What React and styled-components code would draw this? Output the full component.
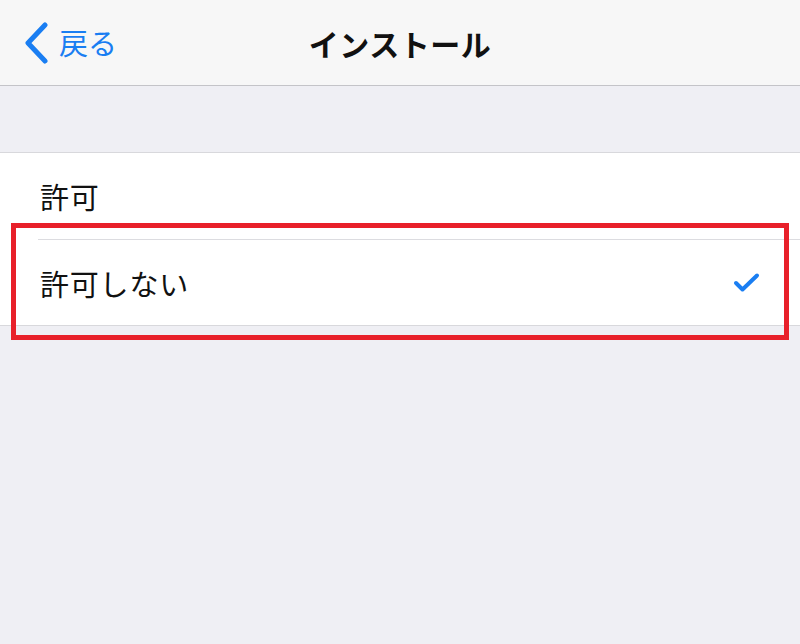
import React from "react";
import styled, { createGlobalStyle } from "styled-components";

const GlobalStyle = createGlobalStyle`
  html, body {
    margin: 0;
    padding: 0;
    background: #efeff4;
    font-family: "Noto Sans CJK JP", "Liberation Sans", sans-serif;
  }
  #root {
    min-height: 644px;
  }
`;

const Page = styled.div`
  width: 800px;
  height: 644px;
  background: #efeff4;
  overflow: hidden;
`;

const NavBar = styled.header`
  height: 85px;
  background: #f7f7f7;
  border-bottom: 1px solid #c4c4c8;
  display: grid;
  grid-template-columns: 1fr auto 1fr;
  align-items: center;
`;

const BackButton = styled.div`
  display: flex;
  align-items: center;
  gap: 9px;
  padding-left: 24px;
  color: #1a7ef2;
  font-size: 29px;
  line-height: 1;
  svg {
    display: block;
  }
`;

const Title = styled.h1`
  margin: 0;
  font-size: 30px;
  font-weight: 700;
  color: #111;
  letter-spacing: 0.5px;
`;

const Spacer = styled.div`
  height: 66px;
`;

const Group = styled.section`
  position: relative;
  background: #fff;
  border-top: 1px solid #d8d8dc;
  border-bottom: 1px solid #d8d8dc;
`;

const Row = styled.div`
  padding-left: 38px;
`;

const RowInner = styled.div`
  display: flex;
  align-items: center;
  justify-content: space-between;
  padding: 0 40px 0 2px;
  border-bottom: ${(p) => (p.$last ? "none" : "1px solid #dcdce0")};
  box-sizing: border-box;
  height: ${(p) => (p.$last ? "85px" : "87px")};
`;

const Label = styled.span`
  font-size: 29px;
  color: #111;
  letter-spacing: 0.8px;
`;

const Highlight = styled.div`
  position: absolute;
  left: 11px;
  top: 70px;
  width: 778px;
  height: 117px;
  border: 5px solid #e8202a;
  box-sizing: border-box;
  pointer-events: none;
`;

const Chevron = () => (
  <svg width="26" height="42" viewBox="0 0 26 42">
    <path
      d="M21 3 L4 21 L21 39"
      fill="none"
      stroke="#1a7ef2"
      strokeWidth="5"
      strokeLinecap="round"
      strokeLinejoin="round"
    />
  </svg>
);

const Check = () => (
  <svg width="27" height="21" viewBox="0 0 27 21">
    <path
      d="M3 11 L9.5 17.5 L24 3.5"
      fill="none"
      stroke="#1a7ef2"
      strokeWidth="4"
      strokeLinecap="round"
      strokeLinejoin="round"
    />
  </svg>
);

const options = [
  { id: 1, text: "許可", checked: false },
  { id: 2, text: "許可しない", checked: true },
];

const App = () => {
  return (
    <Page>
      <GlobalStyle />
      <NavBar>
        <BackButton>
          <Chevron />
          <span>戻る</span>
        </BackButton>
        <Title>インストール</Title>
        <div />
      </NavBar>
      <Spacer />
      <Group>
        {options.map((opt, i) => (
          <Row key={opt.id}>
            <RowInner $last={i === options.length - 1}>
              <Label>{opt.text}</Label>
              {opt.checked && <Check />}
            </RowInner>
          </Row>
        ))}
        <Highlight />
      </Group>
    </Page>
  );
};

export default App;
